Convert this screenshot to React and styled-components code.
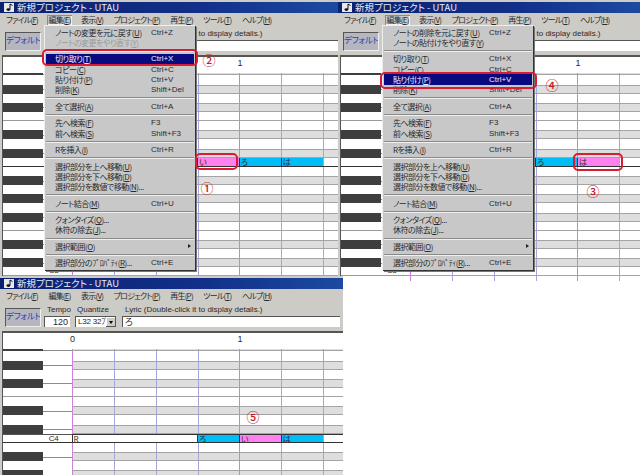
import React from 'react';
import styled, { createGlobalStyle } from 'styled-components';

const UI_FONT = `"Noto Sans CJK JP", "Liberation Sans", sans-serif`;
const ROW_H = 9.15;
const BEAT = 41.85;
const BLACK_ROWS = [-1, 1, 3, 6, 8, 11, 13, 15, 18, 20];
const SPLIT_ROWS = [4, 9, 16, 21];
const NOTE_ROW = 9;

const GlobalStyle = createGlobalStyle`
  html, body {
    margin: 0;
    background: #fff;
  }
  #root {
    width: 640px;
    height: 475px;
    overflow: hidden;
  }
`;

const Desktop = styled.div`
  position: relative;
  width: 640px;
  height: 475px;
  background: #fff;
  overflow: hidden;
`;

const Window = styled.div`
  position: absolute;
  left: ${(p) => p.$x}px;
  top: ${(p) => p.$y}px;
  width: ${(p) => p.$w}px;
  height: ${(p) => p.$h}px;
  padding-top: 2px;
  box-sizing: border-box;
  background: #cdcbc6;
  font-family: ${UI_FONT};
  font-feature-settings: "palt";
  color: #2a2a2a;
  overflow: hidden;
`;

const TitleBar = styled.div`
  display: flex;
  align-items: center;
  gap: 3px;
  height: 11px;
  padding-left: 4px;
  background: linear-gradient(90deg, #0a2070 0%, #12308a 60%, #1c4aa0 100%);
  color: #e8ecf4;
  font-size: 9.5px;
  line-height: 11px;
  white-space: nowrap;
`;

const MenuBar = styled.div`
  display: flex;
  align-items: center;
  height: 11px;
  padding: 1px 0 0 5px;
  gap: 8.5px;
  font-size: 8px;
  letter-spacing: -0.8px;
  white-space: nowrap;
`;

const MenuTitle = styled.span`
  line-height: 10px;
  padding: 0 1px;
  box-shadow: ${(p) => (p.$open ? 'inset 1px 1px 0 #8a8a8a, inset -1px -1px 0 #f4f4f4' : 'none')};
`;

const Toolbar = styled.div`
  display: flex;
  align-items: flex-end;
  height: 30px;
  padding: 0 0 4px 5px;
  box-sizing: border-box;
`;

const PresetButton = styled.div`
  flex: none;
  width: 36px;
  height: 19px;
  margin-right: 3px;
  box-sizing: border-box;
  padding-top: 1px;
  background: #b6b6c0;
  border-top: 1px solid #555;
  border-left: 1px solid #555;
  border-right: 1px solid #eee;
  border-bottom: 1px solid #eee;
  color: #2a48a8;
  font-size: 8.5px;
  line-height: 10px;
  letter-spacing: -0.3px;
  white-space: nowrap;
  overflow: hidden;
`;

const Field = styled.div`
  display: flex;
  flex-direction: column;
  width: ${(p) => p.$w}px;
  margin-right: ${(p) => p.$gap}px;
  flex: none;
`;

const FieldLabel = styled.div`
  height: 12px;
  padding-left: ${(p) => p.$indent}px;
  font-family: "Liberation Sans", sans-serif;
  font-size: 8px;
  line-height: 11px;
  white-space: nowrap;
`;

const TextBox = styled.div`
  height: 11px;
  box-sizing: border-box;
  background: #fff;
  border-top: 1px solid #555;
  border-left: 1px solid #555;
  padding: 0 2px;
  font-family: "Liberation Sans", "Noto Sans CJK JP", sans-serif;
  font-size: 9px;
  line-height: 10px;
  text-align: ${(p) => p.$align || 'left'};
  white-space: nowrap;
  overflow: hidden;
`;

const SelectBox = styled(TextBox)`
  display: flex;
  justify-content: space-between;
  padding-right: 0;
  font-size: 8px;
  letter-spacing: -0.2px;
`;

const SelectText = styled.span`
  flex: 1;
  min-width: 0;
  overflow: hidden;
`;

const SelectArrow = styled.span`
  display: flex;
  align-items: center;
  justify-content: center;
  flex: none;
  width: 10px;
  background: #cdcbc6;
  box-shadow: inset -1px -1px 0 #555, inset 1px 1px 0 #fff;
  &::after {
    content: '';
    border: 2.5px solid transparent;
    border-top: 3px solid #000;
    border-bottom: 0;
  }
`;

const Ruler = styled.div`
  display: flex;
  height: 18px;
  box-sizing: border-box;
  margin-left: 2px;
  padding-left: 67px;
  background: #fff;
  border-top: 2px solid #555;
  border-left: 1px solid #555;
  font-family: "Liberation Sans", sans-serif;
  font-size: 9px;
  line-height: 12px;
`;

const RulerMark = styled.span`
  flex: none;
  width: ${BEAT * 4}px;
`;

const Roll = styled.div`
  margin-left: 2px;
  border-left: 1px solid #555;
  background: #fff;
`;

const Row = styled.div`
  display: flex;
  height: ${(p) => p.$h}px;
  box-sizing: border-box;
  overflow: hidden;
`;

const Key = styled.div`
  display: flex;
  justify-content: space-between;
  flex: none;
  width: 68.5px;
  box-sizing: border-box;
  border-top: ${(p) => (p.$edgeTop ? '1px solid #555' : 'none')};
  border-bottom: ${(p) => (p.$edge ? `1px solid ${p.$edge}` : 'none')};
`;

const BlackKey = styled.div`
  flex: none;
  width: 40px;
  background: #3e3e3e;
`;

const KeyStub = styled.div`
  flex: 1;
  height: 50%;
  border-bottom: 1px solid #8c8c8c;
`;

const KeyName = styled.span`
  margin: 0 13px 0 auto;
  font-family: "Liberation Sans", sans-serif;
  font-size: 8px;
  line-height: 8px;
  letter-spacing: -0.3px;
`;

const Lane = styled.div`
  display: flex;
  flex: 1;
  box-sizing: border-box;
  background-color: ${(p) => (p.$shaded ? '#dedede' : '#fff')};
  background-image:
    repeating-linear-gradient(90deg, #cf80dc 0 1px, transparent 1px ${BEAT * 4}px),
    repeating-linear-gradient(90deg, #a6a6de 0 1px, transparent 1px ${BEAT}px);
  border-top: ${(p) => (p.$edgeTop ? `1px solid ${p.$edgeTop}` : 'none')};
  border-bottom: ${(p) => (p.$edge ? `1px solid ${p.$edge}` : 'none')};
`;

const NOTE_COLORS = { blue: '#00bdf8', pink: '#ff80ee', rest: '#fff' };

const Note = styled.div`
  flex: none;
  width: ${(p) => p.$w}px;
  box-sizing: border-box;
  padding-left: 1px;
  background: ${(p) => NOTE_COLORS[p.$kind]};
  border-left: 1px solid #333;
  font-size: 8px;
  line-height: 8px;
  overflow: hidden;
`;

const DropMenu = styled.div`
  position: absolute;
  left: 44px;
  top: 25px;
  width: 151px;
  height: 245px;
  padding-top: 1px;
  box-sizing: border-box;
  background: #c8c8c8;
  border-top: 1px solid #eee;
  border-left: 1px solid #eee;
  box-shadow: 1px 1px 0 #333, 2px 2px 0 #777;
  font-size: 8px;
`;

const MenuItem = styled.div`
  display: flex;
  align-items: center;
  position: relative;
  height: 10.3px;
  margin: 0 1px;
  padding-left: 9px;
  white-space: nowrap;
  background: ${(p) => (p.$active ? '#0a0a80' : 'transparent')};
  color: ${(p) => (p.$active ? '#eef' : p.$disabled ? '#9a9a9a' : '#2a2a2a')};
`;

const ItemLabel = styled.span`
  flex: none;
  width: 96px;
  letter-spacing: -0.5px;
`;

const Accel = styled.span`
  text-decoration: underline;
`;

const ItemKey = styled.span`
  font-family: "Liberation Sans", sans-serif;
  font-size: 8px;
`;

const SubArrow = styled.span`
  position: absolute;
  right: 3px;
  top: 3px;
  border: 2.5px solid transparent;
  border-left: 3px solid #222;
  border-right: 0;
`;

const MenuSep = styled.div`
  height: 6.2px;
  margin: 0 1px;
  box-sizing: border-box;
  padding-top: 2.5px;
  &::after {
    content: '';
    display: block;
    height: 1px;
    background: #8a8a8a;
    box-shadow: 0 1px 0 #f0f0f0;
  }
`;

const RedBox = styled.div`
  position: absolute;
  left: ${(p) => p.$x}px;
  top: ${(p) => p.$y}px;
  width: ${(p) => p.$w}px;
  height: ${(p) => p.$h}px;
  box-sizing: border-box;
  border: 2px solid #d81c34;
  border-radius: 5px;
`;

const Step = styled.span`
  position: absolute;
  left: ${(p) => p.$x}px;
  top: ${(p) => p.$y}px;
  width: 14px;
  color: #c41e1e;
  font-family: "Noto Sans CJK JP", sans-serif;
  font-size: 13px;
  font-weight: 500;
  line-height: 14px;
  text-align: center;
`;

const AppIcon = () => (
  <svg width="10" height="9" viewBox="0 0 10 9">
    <rect width="10" height="9" fill="#e8e8e8" />
    <path d="M6 1v5.2" stroke="#111" strokeWidth="1" />
    <path d="M6 1l2.5 1.5" stroke="#111" strokeWidth="1" />
    <ellipse cx="4.4" cy="6.6" rx="1.9" ry="1.4" fill="#111" />
  </svg>
);

const MENUBAR = ['ファイル(F)', '編集(E)', '表示(V)', 'プロジェクト(P)', '再生(P)', 'ツール(T)', 'ヘルプ(H)'];

const editMenu = (undo, redo, redoDisabled, active) => [
  { label: undo, keys: 'Ctrl+Z' },
  { label: redo, disabled: redoDisabled },
  null,
  { label: '切り取り(T)', keys: 'Ctrl+X', active: active === 'cut' },
  { label: 'コピー(C)', keys: 'Ctrl+C' },
  { label: '貼り付け(P)', keys: 'Ctrl+V', active: active === 'paste' },
  { label: '削除(K)', keys: 'Shift+Del' },
  null,
  { label: '全て選択(A)', keys: 'Ctrl+A' },
  null,
  { label: '先へ検索(F)', keys: 'F3' },
  { label: '前へ検索(S)', keys: 'Shift+F3' },
  null,
  { label: 'Rを挿入(I)', keys: 'Ctrl+R' },
  null,
  { label: '選択部分を上へ移動(U)' },
  { label: '選択部分を下へ移動(D)' },
  { label: '選択部分を数値で移動(N)...' },
  null,
  { label: 'ノート結合(M)', keys: 'Ctrl+U' },
  null,
  { label: 'クォンタイズ(Q)...' },
  { label: '休符の除去(J)...' },
  null,
  { label: '選択範囲(O)', sub: true },
  null,
  { label: '選択部分のﾌﾟﾛﾊﾟﾃｨ(R)...', keys: 'Ctrl+E' },
];

// puts the underline under the accelerator letter, as in "切り取り(T)"
const withAccel = (label) => {
  const m = label.match(/^(.*\()(.)(\).*)$/);
  if (!m) return label;
  return (
    <>
      {m[1]}
      <Accel>{m[2]}</Accel>
      {m[3]}
    </>
  );
};

const PianoRow = ({ index, notes, boldTop }) => {
  const black = BLACK_ROWS.includes(index);
  const isNote = index === NOTE_ROW;
  const split = SPLIT_ROWS.includes(index);
  const height = index === -1 ? 2.4 : ROW_H;
  const edge = isNote ? '#333' : split ? '#9a9a9a' : null;
  const laneEdge = isNote ? '#333' : black || split ? '#a4a4a4' : null;
  const name = index === NOTE_ROW ? 'C4' : index === 21 ? 'C3' : null;

  return (
    <Row $h={height}>
      <Key $edge={edge} $edgeTop={isNote && boldTop}>
        {black && <BlackKey />}
        {black && <KeyStub />}
        {name && <KeyName>{name}</KeyName>}
      </Key>
      <Lane
        $shaded={black}
        $edge={laneEdge}
        $edgeTop={isNote && boldTop ? '#333' : black && index !== -1 ? '#a4a4a4' : null}
      >
        {isNote &&
          notes.map((n, i) => (
            <Note key={i} $kind={n.kind} $w={n.beats * BEAT}>
              {n.text}
            </Note>
          ))}
      </Lane>
    </Row>
  );
};

const UtauWindow = ({ x, y, w, h, notes, lyric, menu, boldTop, children }) => {
  const rows = [];
  for (let i = -1; i <= 22; i++) rows.push(i);

  return (
    <Window $x={x} $y={y} $w={w} $h={h}>
      <TitleBar>
        <AppIcon />
        新規プロジェクト - UTAU
      </TitleBar>
      <MenuBar>
        {MENUBAR.map((m, i) => (
          <MenuTitle key={m} $open={menu && i === 1}>
            {withAccel(m)}
          </MenuTitle>
        ))}
      </MenuBar>
      <Toolbar>
        <PresetButton>デフォルト</PresetButton>
        <Field $w={26} $gap={5}>
          <FieldLabel $indent={3}>Tempo</FieldLabel>
          <TextBox $align="right">120</TextBox>
        </Field>
        <Field $w={41} $gap={6}>
          <FieldLabel $indent={2}>Quantize</FieldLabel>
          <SelectBox>
            <SelectText>L32 32ﾌﾟ</SelectText>
            <SelectArrow />
          </SelectBox>
        </Field>
        <Field $w={218} $gap={0}>
          <FieldLabel $indent={3}>Lyric (Double-click it to display details.)</FieldLabel>
          <TextBox>{lyric}</TextBox>
        </Field>
      </Toolbar>
      <Ruler>
        <RulerMark>0</RulerMark>
        <RulerMark>1</RulerMark>
      </Ruler>
      <Roll>
        {rows.map((i) => (
          <PianoRow key={i} index={i} notes={notes} boldTop={boldTop} />
        ))}
      </Roll>
      {menu && (
        <DropMenu>
          {menu.map((item, i) =>
            item ? (
              <MenuItem key={i} $active={item.active} $disabled={item.disabled}>
                <ItemLabel>{withAccel(item.label)}</ItemLabel>
                {item.keys && <ItemKey>{item.keys}</ItemKey>}
                {item.sub && <SubArrow />}
              </MenuItem>
            ) : (
              <MenuSep key={i} />
            )
          )}
        </DropMenu>
      )}
      {children}
    </Window>
  );
};

export default function App() {
  return (
    <Desktop>
      <GlobalStyle />
      <UtauWindow
        x={0}
        y={0}
        w={339}
        h={276}
        lyric="い"
        menu={editMenu('ノートの変更を元に戻す(U)', 'ノートの変更をやり直す(Y)', true, 'cut')}
        notes={[
          { kind: 'rest', beats: 3, text: 'R' },
          { kind: 'pink', beats: 1, text: 'い' },
          { kind: 'blue', beats: 1, text: 'ろ' },
          { kind: 'blue', beats: 1, text: 'は' },
        ]}
      >
        <RedBox $x={42} $y={49} $w={156} $h={17} />
        <RedBox $x={195} $y={153} $w={43} $h={17} />
        <Step $x={202} $y={53}>②</Step>
        <Step $x={200} $y={181}>①</Step>
      </UtauWindow>
      <UtauWindow
        x={338}
        y={0}
        w={302}
        h={281}
        lyric="は"
        menu={editMenu('ノートの削除を元に戻す(U)', 'ノートの貼付けをやり直す(Y)', false, 'paste')}
        notes={[
          { kind: 'rest', beats: 3, text: 'R' },
          { kind: 'blue', beats: 1, text: 'ろ' },
          { kind: 'pink', beats: 1, text: 'は' },
        ]}
      >
        <RedBox $x={42} $y={72} $w={157} $h={17} />
        <RedBox $x={235} $y={153} $w={50} $h={18} />
        <Step $x={207} $y={78}>④</Step>
        <Step $x={248} $y={184}>③</Step>
      </UtauWindow>
      <UtauWindow
        x={0}
        y={276}
        w={343}
        h={199}
        lyric="ろ"
        boldTop
        notes={[
          { kind: 'rest', beats: 3, text: 'R' },
          { kind: 'blue', beats: 1, text: 'ろ' },
          { kind: 'pink', beats: 1, text: 'い' },
          { kind: 'blue', beats: 1, text: 'は' },
        ]}
      >
        <Step $x={246} $y={134}>⑤</Step>
      </UtauWindow>
    </Desktop>
  );
}
